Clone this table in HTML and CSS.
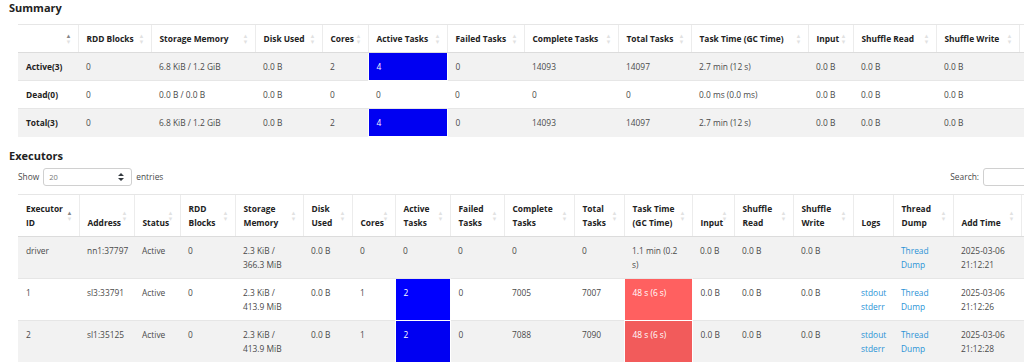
FILE: index.html
```html
<!DOCTYPE html>
<html lang="en">
<head>
<meta charset="utf-8">
<title>Executors</title>
<link rel="stylesheet" href="styles.css">
</head>
<body>
<div class="page">
  <h4 class="section-title">Summary</h4>
  <table class="tbl summary">
    <colgroup>
      <col class="s1"><col class="s2"><col class="s3"><col class="s4"><col class="s5"><col class="s6"><col class="s7">
      <col class="s8"><col class="s9"><col class="s10"><col class="s11"><col class="s12"><col class="s13"><col class="s14">
    </colgroup>
    <thead>
      <tr>
        <th class="sort asc"></th>
        <th class="sort">RDD Blocks</th>
        <th class="sort">Storage Memory</th>
        <th class="sort">Disk Used</th>
        <th class="sort">Cores</th>
        <th class="sort">Active Tasks</th>
        <th class="sort">Failed Tasks</th>
        <th class="sort">Complete Tasks</th>
        <th class="sort">Total Tasks</th>
        <th class="sort">Task Time (GC Time)</th>
        <th class="sort">Input</th>
        <th class="sort">Shuffle Read</th>
        <th class="sort">Shuffle Write</th>
        <th></th>
      </tr>
    </thead>
    <tbody>
      <tr>
        <td class="rowhead">Active(3)</td><td>0</td><td>6.8 KiB / 1.2 GiB</td><td>0.0 B</td><td>2</td>
        <td class="hl-active">4</td><td>0</td><td>14093</td><td>14097</td><td>2.7 min (12 s)</td>
        <td>0.0 B</td><td>0.0 B</td><td>0.0 B</td><td></td>
      </tr>
      <tr>
        <td class="rowhead">Dead(0)</td><td>0</td><td>0.0 B / 0.0 B</td><td>0.0 B</td><td>0</td>
        <td>0</td><td>0</td><td>0</td><td>0</td><td>0.0 ms (0.0 ms)</td>
        <td>0.0 B</td><td>0.0 B</td><td>0.0 B</td><td></td>
      </tr>
      <tr>
        <td class="rowhead">Total(3)</td><td>0</td><td>6.8 KiB / 1.2 GiB</td><td>0.0 B</td><td>2</td>
        <td class="hl-active">4</td><td>0</td><td>14093</td><td>14097</td><td>2.7 min (12 s)</td>
        <td>0.0 B</td><td>0.0 B</td><td>0.0 B</td><td></td>
      </tr>
    </tbody>
  </table>

  <h4 class="section-title exec-title">Executors</h4>
  <div class="exec-block">
    <div class="dt-controls">
      <div class="length">
        <span>Show</span>
        <span class="select">
          <span class="select-value">20</span>
          <svg class="select-caret" width="6" height="8" viewBox="0 0 6 8"><path d="M3 0 L6 3 L0 3 Z M3 8 L6 5 L0 5 Z" fill="#343a40"/></svg>
        </span>
        <span>entries</span>
      </div>
      <div class="search">
        <span>Search:</span>
        <span class="search-input"></span>
      </div>
    </div>
    <table class="tbl executors">
      <colgroup>
        <col class="e1"><col class="e2"><col class="e3"><col class="e4"><col class="e5"><col class="e6"><col class="e7">
        <col class="e8"><col class="e9"><col class="e10"><col class="e11"><col class="e12"><col class="e13"><col class="e14">
        <col class="e15"><col class="e16"><col class="e17"><col class="e18"><col class="e19">
      </colgroup>
      <thead>
        <tr>
          <th class="sort asc">Executor ID</th>
          <th class="sort">Address</th>
          <th class="sort">Status</th>
          <th class="sort">RDD Blocks</th>
          <th class="sort">Storage Memory</th>
          <th class="sort">Disk Used</th>
          <th class="sort">Cores</th>
          <th class="sort">Active Tasks</th>
          <th class="sort">Failed Tasks</th>
          <th class="sort">Complete Tasks</th>
          <th class="sort">Total Tasks</th>
          <th class="sort">Task Time (GC Time)</th>
          <th class="sort">Input</th>
          <th class="sort">Shuffle Read</th>
          <th class="sort">Shuffle Write</th>
          <th>Logs</th>
          <th class="sort">Thread Dump</th>
          <th class="sort">Add Time</th>
          <th></th>
        </tr>
      </thead>
      <tbody>
        <tr>
          <td>driver</td><td>nn1:37797</td><td>Active</td><td>0</td><td>2.3 KiB / 366.3 MiB</td><td>0.0 B</td>
          <td>0</td><td>0</td><td>0</td><td>0</td><td>0</td><td>1.1 min (0.2 s)</td>
          <td>0.0 B</td><td>0.0 B</td><td>0.0 B</td><td></td>
          <td><a href="#">Thread Dump</a></td><td>2025-03-06 21:12:21</td><td></td>
        </tr>
        <tr>
          <td>1</td><td>sl3:33791</td><td>Active</td><td>0</td><td>2.3 KiB / 413.9 MiB</td><td>0.0 B</td>
          <td>1</td><td class="hl-active">2</td><td>0</td><td>7005</td><td>7007</td><td class="hl-gc">48 s (6 s)</td>
          <td>0.0 B</td><td>0.0 B</td><td>0.0 B</td>
          <td><a href="#">stdout</a><br><a href="#">stderr</a></td>
          <td><a href="#">Thread Dump</a></td><td>2025-03-06 21:12:26</td><td></td>
        </tr>
        <tr>
          <td>2</td><td>sl1:35125</td><td>Active</td><td>0</td><td>2.3 KiB / 413.9 MiB</td><td>0.0 B</td>
          <td>1</td><td class="hl-active">2</td><td>0</td><td>7088</td><td>7090</td><td class="hl-gc">48 s (6 s)</td>
          <td>0.0 B</td><td>0.0 B</td><td>0.0 B</td>
          <td><a href="#">stdout</a><br><a href="#">stderr</a></td>
          <td><a href="#">Thread Dump</a></td><td>2025-03-06 21:12:28</td><td></td>
        </tr>
      </tbody>
    </table>
  </div>
</div>
</body>
</html>
```

FILE: styles.css
```css
html, body {
  margin: 0;
  padding: 0;
  overflow: hidden;
  background: #fff;
}

body {
  font-family: "Open Sans", "Noto Sans", sans-serif;
  font-size: 8.4px;
  line-height: 14px;
  color: #4a4a4a;
}

.page {
  padding: 0 0 0 9px;
}

.section-title {
  margin: 0;
  font-size: 11px;
  line-height: 16px;
  font-weight: 700;
  color: #222;
}

.exec-title {
  margin-top: 11px;
}

.tbl {
  border-collapse: collapse;
  table-layout: fixed;
  margin-left: 9px;
}

.summary {
  width: 1071px;
  margin-top: 8px;
}

.summary th {
  white-space: nowrap;
}

.exec-block {
  margin-left: 9px;
  width: 1085px;
}

.exec-block .tbl {
  margin-left: 0;
}

.executors {
  width: 1085px;
}

.tbl th,
.tbl td {
  text-align: left;
  padding: 7px 7px 6px 8px;
  border-top: 1px solid #e6e6e6;
  background-clip: padding-box;
  overflow: hidden;
}

.tbl th {
  position: relative;
  font-weight: 700;
  color: #222;
  vertical-align: bottom;
  padding-right: 10px;
  border-left: 1px solid #ececec;
  border-bottom: 1px solid #dcdcdc;
}

.tbl th:first-child {
  border-left: none;
}

.tbl td {
  vertical-align: top;
}

.tbl tbody tr:nth-child(odd) td {
  box-shadow: inset 0 0 0 9999px rgba(0, 0, 0, 0.05);
}

.rowhead {
  font-weight: 700;
  color: #222;
}

.sort::before,
.sort::after {
  position: absolute;
  right: 6px;
  font-size: 6px;
  line-height: 6px;
  color: #222;
  opacity: 0.13;
}

.sort::before {
  content: "\25B2";
  top: calc(50% - 6px);
}

.sort::after {
  content: "\25BC";
  top: calc(50%);
}

.sort.asc::before {
  opacity: 0.55;
}

.hl-active {
  background: #0000ff;
  color: #fff;
  border: 1px solid rgba(255, 255, 255, 0.5);
}

.hl-gc {
  background: #ff6060;
  color: #fff;
  border: 1px solid rgba(255, 255, 255, 0.5);
}

a {
  color: #2b93d6;
  text-decoration: none;
}

/* summary columns */
.s1 { width: 60px; }
.s2 { width: 73px; }
.s3 { width: 104px; }
.s4 { width: 67px; }
.s5 { width: 46px; }
.s6 { width: 79px; }
.s7 { width: 77px; }
.s8 { width: 94px; }
.s9 { width: 73px; }
.s10 { width: 117px; }
.s11 { width: 45px; }
.s12 { width: 83px; }
.s13 { width: 83px; }
.s14 { width: 70px; }

/* executor columns */
.e1 { width: 61px; }
.e2 { width: 55px; }
.e3 { width: 46px; }
.e4 { width: 55px; }
.e5 { width: 68px; }
.e6 { width: 49px; }
.e7 { width: 43px; }
.e8 { width: 55px; }
.e9 { width: 54px; }
.e10 { width: 70px; }
.e11 { width: 50px; }
.e12 { width: 68px; }
.e13 { width: 42px; }
.e14 { width: 59px; }
.e15 { width: 60px; }
.e16 { width: 40px; }
.e17 { width: 60px; }
.e18 { width: 68px; }
.e19 { width: 82px; }

/* datatable controls */
.dt-controls {
  display: flex;
  justify-content: space-between;
  align-items: center;
  margin-top: 4px;
  margin-bottom: 8px;
  height: 18px;
}

.length,
.search {
  display: flex;
  align-items: center;
  gap: 4px;
  color: #4a4a4a;
}

.select {
  display: flex;
  align-items: center;
  justify-content: space-between;
  box-sizing: border-box;
  width: 89px;
  height: 18px;
  padding: 0 7px 0 5px;
  border: 1px solid #d0d0d0;
  border-radius: 3px;
  font-size: 7.5px;
  color: #777;
}

.search-input {
  display: block;
  box-sizing: border-box;
  width: 120px;
  height: 18px;
  border: 1px solid #d0d0d0;
  border-radius: 3px;
}
```
